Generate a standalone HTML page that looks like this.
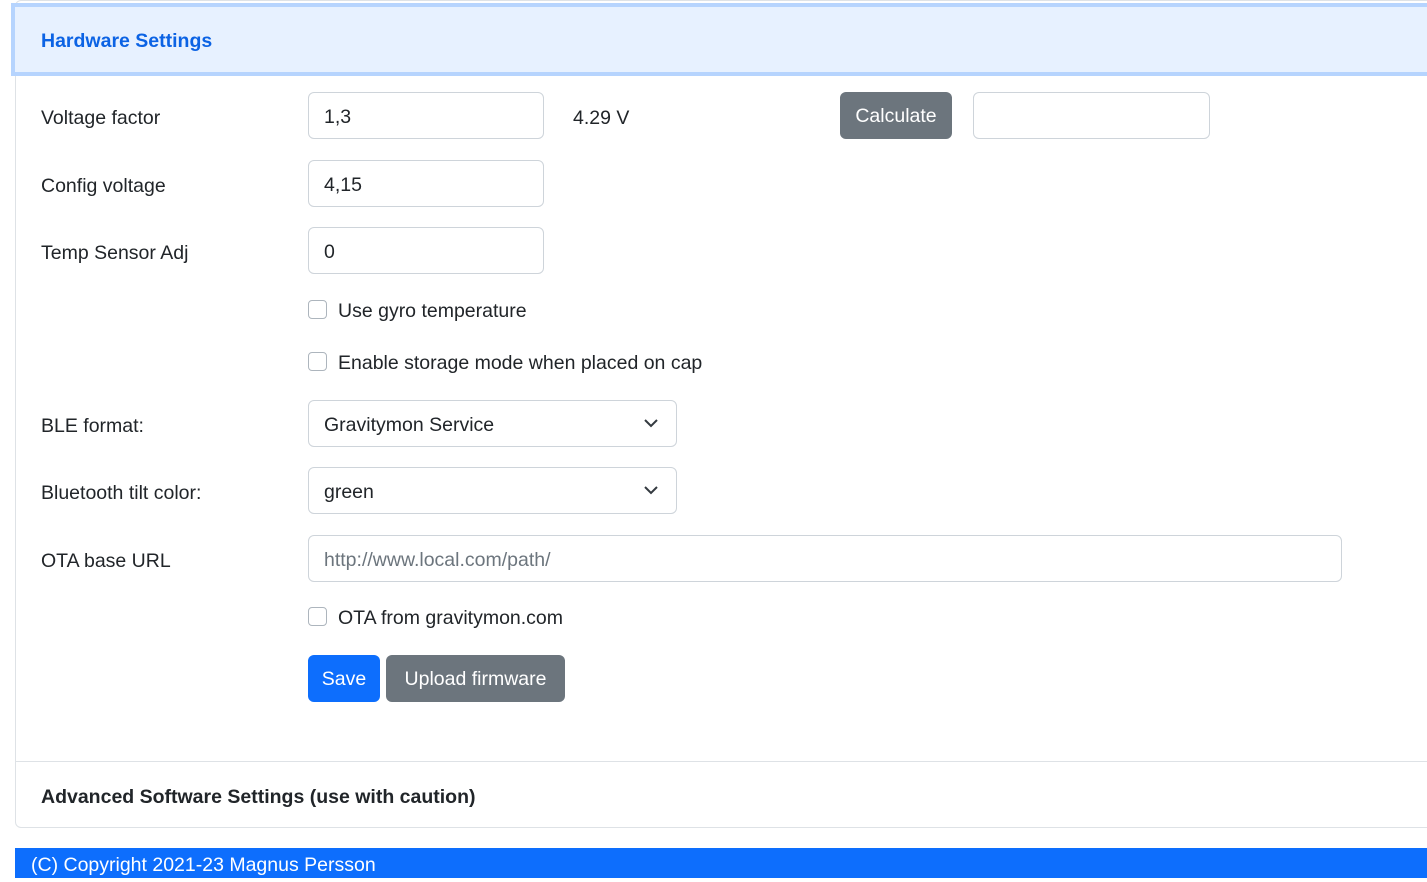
<!DOCTYPE html>
<html><head><style>
body{margin:0;width:1427px;height:878px;overflow:hidden;background:#fff;font-family:"Liberation Sans",sans-serif;color:#212529;position:relative}
.a{position:absolute}
.lbl{position:absolute;left:41px;font-size:19.5px}
.inp{position:absolute;border:1px solid #ced4da;border-radius:6px;background:#fff;box-sizing:border-box;height:47px;font-size:19.5px;padding:0 15px;line-height:48px}
.chk{position:absolute;left:308px;width:19px;height:19px;border:1px solid #adb5bd;border-radius:4px;box-sizing:border-box}
.ct{position:absolute;left:338px;font-size:19.5px}
.btn{position:absolute;border-radius:6px;color:#fff;font-size:19.5px;text-align:center;height:47px;line-height:48px}
.chev{position:absolute;right:18px;top:17px}
</style></head><body>
<div class="a" style="left:15px;top:0;width:1420px;height:828px;border:1px solid #dee2e6;border-radius:6px;box-sizing:border-box"></div>
<div class="a" style="left:11px;top:3px;width:1420px;height:73px;background:#e7f1ff;border:4px solid #b6d4fe;border-right:none;box-sizing:border-box"></div>
<div class="a" style="left:41px;top:30px;font-size:19.5px;font-weight:bold;color:#0c63e4">Hardware Settings</div>

<div class="lbl" style="top:107px">Voltage factor</div>
<div class="inp" style="left:308px;top:92px;width:236px">1,3</div>
<div class="a" style="left:573px;top:107px;font-size:19.5px">4.29 V</div>
<div class="btn" style="left:840px;top:92px;width:112px;background:#6c757d">Calculate</div>
<div class="inp" style="left:973px;top:92px;width:237px"></div>

<div class="lbl" style="top:175px">Config voltage</div>
<div class="inp" style="left:308px;top:160px;width:236px">4,15</div>
<div class="lbl" style="top:242px">Temp Sensor Adj</div>
<div class="inp" style="left:308px;top:227px;width:236px">0</div>

<div class="chk" style="top:300px"></div><div class="ct" style="top:300px">Use gyro temperature</div>
<div class="chk" style="top:352px"></div><div class="ct" style="top:352px">Enable storage mode when placed on cap</div>

<div class="lbl" style="top:415px">BLE format:</div>
<div class="inp" style="left:308px;top:400px;width:369px">Gravitymon Service<svg class="chev" width="14" height="10" viewBox="0 0 14 10"><path d="M1 2l6 6 6-6" fill="none" stroke="#343a40" stroke-width="2"/></svg></div>
<div class="lbl" style="top:482px">Bluetooth tilt color:</div>
<div class="inp" style="left:308px;top:467px;width:369px">green<svg class="chev" width="14" height="10" viewBox="0 0 14 10"><path d="M1 2l6 6 6-6" fill="none" stroke="#343a40" stroke-width="2"/></svg></div>
<div class="lbl" style="top:550px">OTA base URL</div>
<div class="inp" style="left:308px;top:535px;width:1034px;color:#6c757d">http://www.local.com/path/</div>

<div class="chk" style="top:607px"></div><div class="ct" style="top:607px">OTA from gravitymon.com</div>

<div class="btn" style="left:308px;top:655px;width:72px;background:#0d6efd">Save</div>
<div class="btn" style="left:386px;top:655px;width:179px;background:#6c757d">Upload firmware</div>

<div class="a" style="left:16px;top:761px;width:1411px;height:1px;background:#dee2e6"></div>
<div class="a" style="left:41px;top:786px;font-size:19.5px;font-weight:bold">Advanced Software Settings (use with caution)</div>

<div class="a" style="left:15px;top:848px;width:1412px;height:30px;background:#0d6efd;color:#fff;font-size:19.5px;line-height:34px;padding-left:16px;box-sizing:border-box">(C) Copyright 2021-23 Magnus Persson</div>
</body></html>
